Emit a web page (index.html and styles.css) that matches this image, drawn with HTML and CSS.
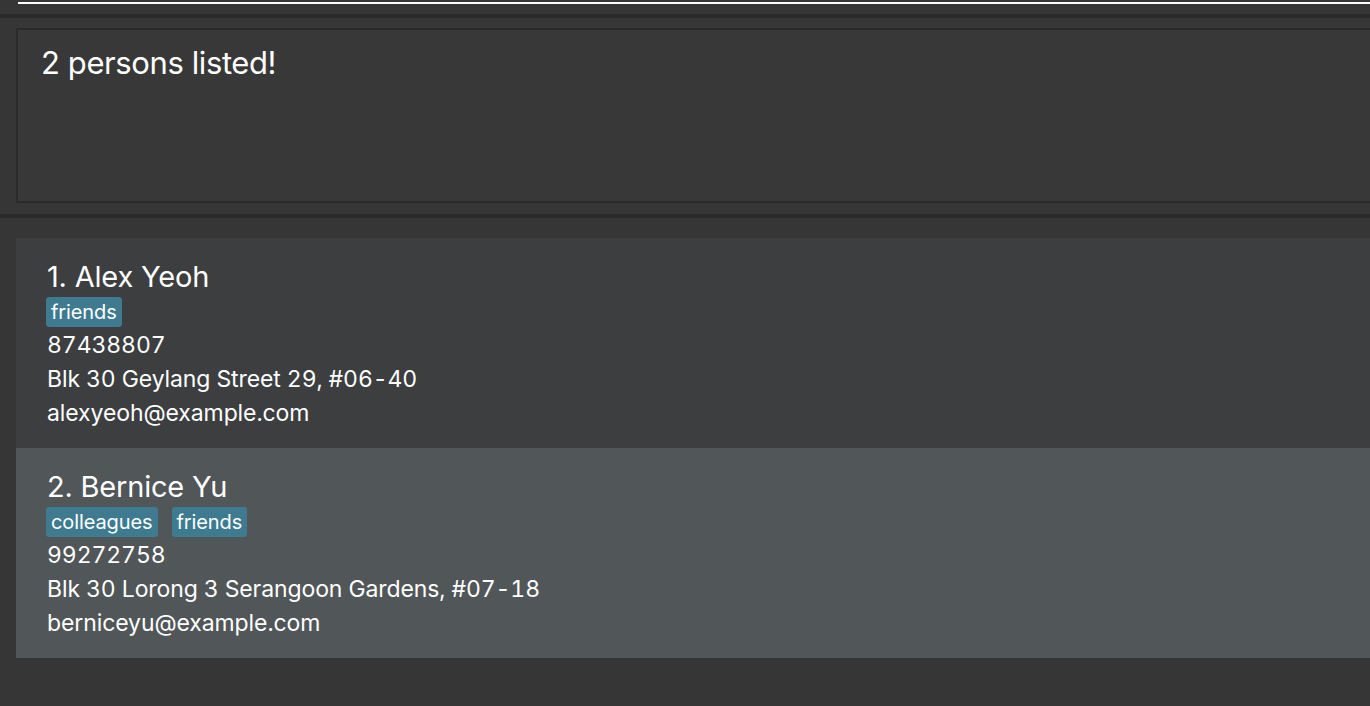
FILE: index.html
```html
<!DOCTYPE html>
<html>
<head>
<meta charset="utf-8">
<link rel="stylesheet" href="styles.css">
</head>
<body>
<div class="app">
  <div class="command-area">
    <div class="command-line"></div>
  </div>
  <div class="divider"></div>
  <div class="result-area">
    <div class="result-box">2 persons listed!</div>
  </div>
  <div class="divider"></div>
  <div class="list-area">
    <div class="card card-even">
      <div class="name">1. Alex Yeoh</div>
      <div class="tags"><span class="tag">friends</span></div>
      <div class="field">87438807</div>
      <div class="field">Blk 30 Geylang Street 29, #06-40</div>
      <div class="field">alexyeoh@example.com</div>
    </div>
    <div class="card card-odd">
      <div class="name">2. Bernice Yu</div>
      <div class="tags"><span class="tag">colleagues</span><span class="tag">friends</span></div>
      <div class="field">99272758</div>
      <div class="field">Blk 30 Lorong 3 Serangoon Gardens, #07-18</div>
      <div class="field">berniceyu@example.com</div>
    </div>
  </div>
</div>
</body>
</html>
```

FILE: styles.css
```css
html, body {
  margin: 0;
  padding: 0;
  background: #363636;
  overflow: hidden;
}
body {
  width: 1370px;
  height: 706px;
  font-family: Inter, "Noto Sans", sans-serif;
  color: #ffffff;
}
.app {
  display: flex;
  flex-direction: column;
  width: 1370px;
  height: 706px;
}
.command-area {
  height: 14px;
  padding-top: 2px;
  padding-left: 18px;
  box-sizing: border-box;
}
.command-line {
  height: 2px;
  background: #ffffff;
}
.divider {
  height: 4px;
  background: #2b2b2b;
}
.result-area {
  padding: 10px 0 11px 16px;
}
.result-box {
  height: 175px;
  box-sizing: border-box;
  width: 1400px;
  border: 2px solid #2a2a2a;
  background: #383838;
  padding: 14px 0 0 23px;
  font-size: 31px;
  line-height: 38px;
  letter-spacing: -0.4px;
}
.list-area {
  padding: 20px 0 0 16px;
}
.card {
  height: 210px;
  box-sizing: border-box;
  width: 1400px;
  padding: 21px 0 0 31px;
  display: flex;
  flex-direction: column;
}
.card-even { background: #3c3e40; }
.card-odd { background: #515658; }
.name {
  font-size: 29px;
  line-height: 36px;
  letter-spacing: -0.2px;
}
.tags {
  display: flex;
  gap: 14px;
  margin-left: -1px;
  height: 33px;
  align-items: center;
}
.tag {
  background: #3e7b91;
  border-radius: 3px;
  font-size: 20px;
  line-height: 30px;
  padding: 0 5px;
  letter-spacing: -0.1px;
}
.field {
  font-size: 23px;
  line-height: 34px;
  letter-spacing: -0.1px;
  font-feature-settings: "tnum";
}
```
